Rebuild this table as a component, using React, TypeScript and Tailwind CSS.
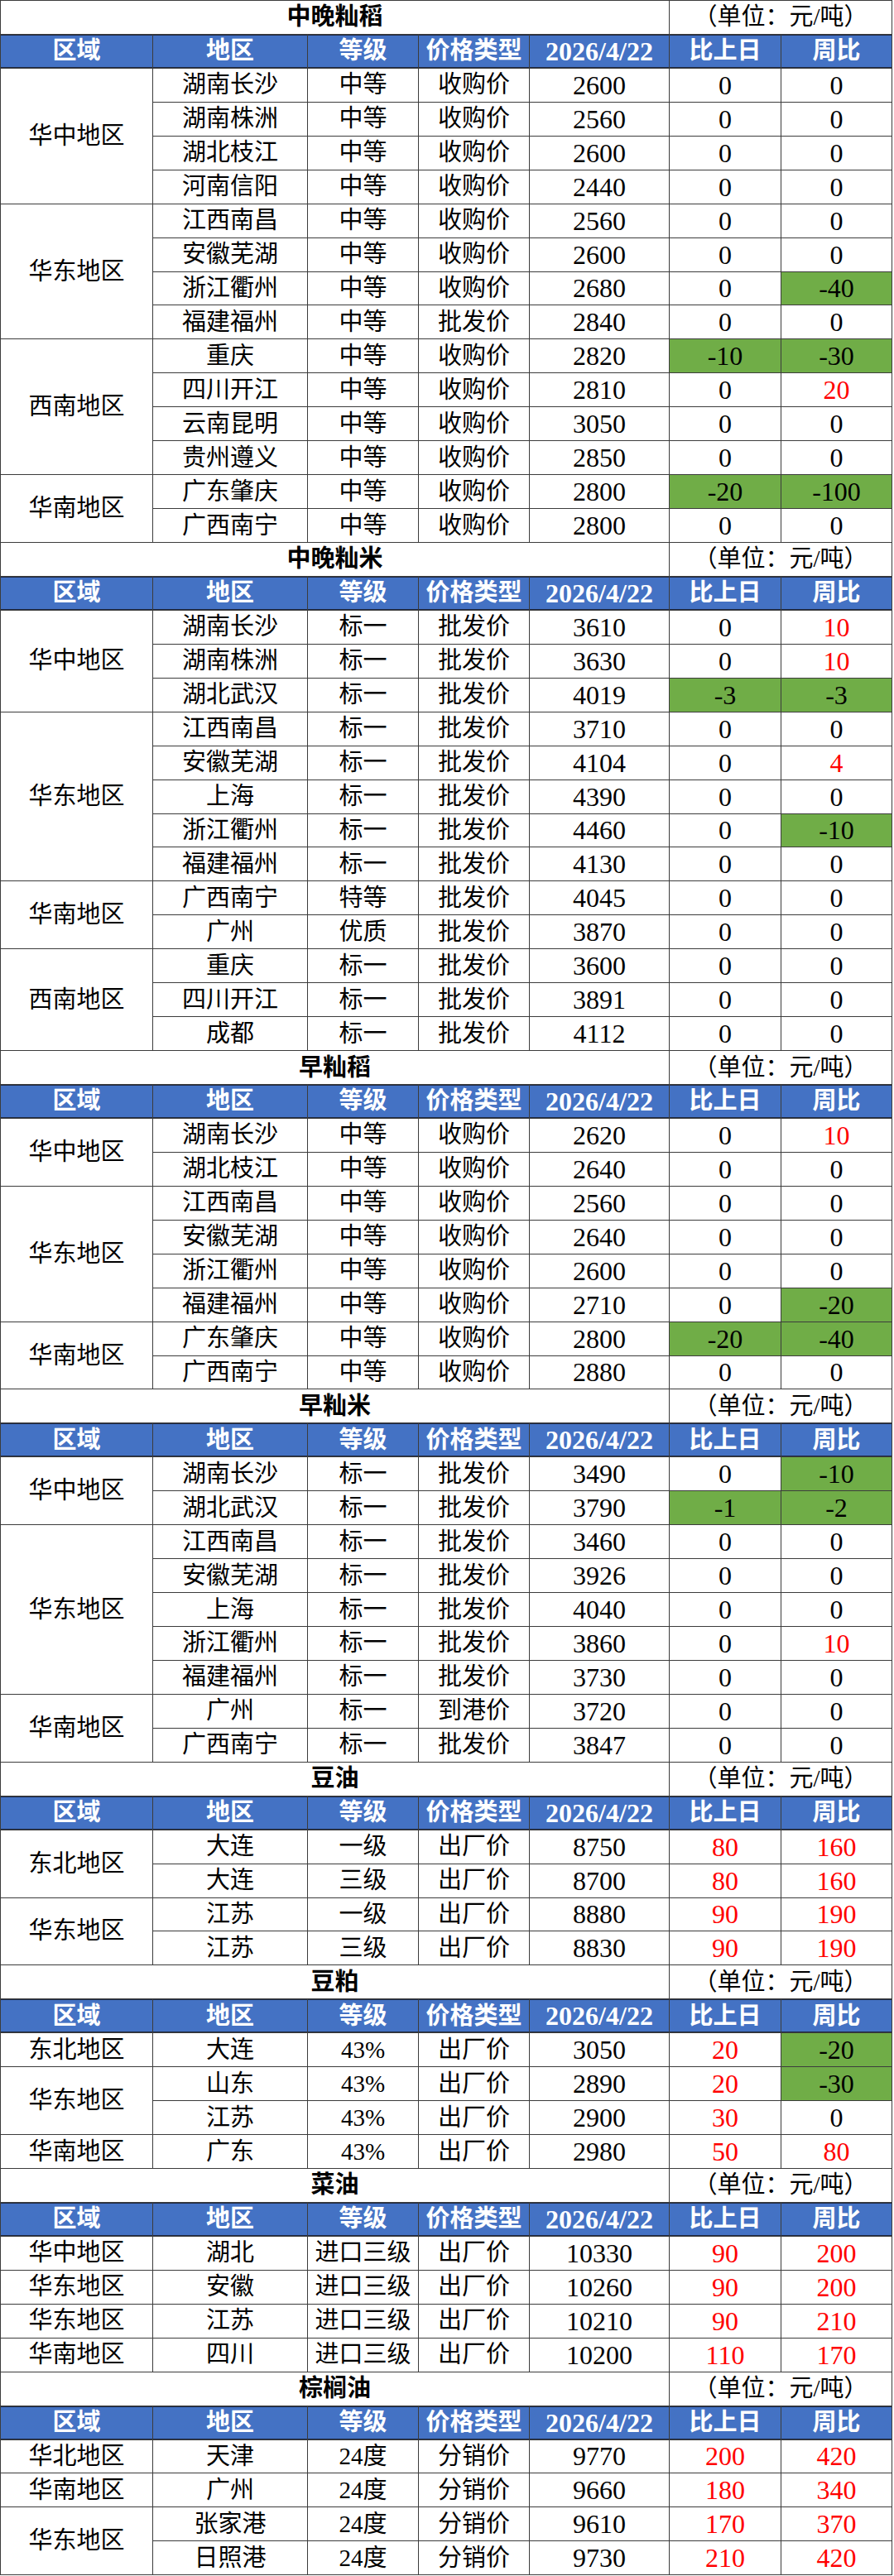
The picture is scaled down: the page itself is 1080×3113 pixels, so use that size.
import React from "react";

type Row = [string, string, string, string, string, string];
type Group = { region: string; rows: Row[] };
type Section = { name: string; groups: Group[] };

const sections: Section[] = [
  {
    name: "中晚籼稻",
    groups: [
      {
        region: "华中地区",
        rows: [
          ["湖南长沙", "中等", "收购价", "2600", "0", "0"],
          ["湖南株洲", "中等", "收购价", "2560", "0", "0"],
          ["湖北枝江", "中等", "收购价", "2600", "0", "0"],
          ["河南信阳", "中等", "收购价", "2440", "0", "0"],
        ],
      },
      {
        region: "华东地区",
        rows: [
          ["江西南昌", "中等", "收购价", "2560", "0", "0"],
          ["安徽芜湖", "中等", "收购价", "2600", "0", "0"],
          ["浙江衢州", "中等", "收购价", "2680", "0", "-40"],
          ["福建福州", "中等", "批发价", "2840", "0", "0"],
        ],
      },
      {
        region: "西南地区",
        rows: [
          ["重庆", "中等", "收购价", "2820", "-10", "-30"],
          ["四川开江", "中等", "收购价", "2810", "0", "20"],
          ["云南昆明", "中等", "收购价", "3050", "0", "0"],
          ["贵州遵义", "中等", "收购价", "2850", "0", "0"],
        ],
      },
      {
        region: "华南地区",
        rows: [
          ["广东肇庆", "中等", "收购价", "2800", "-20", "-100"],
          ["广西南宁", "中等", "收购价", "2800", "0", "0"],
        ],
      },
    ],
  },
  {
    name: "中晚籼米",
    groups: [
      {
        region: "华中地区",
        rows: [
          ["湖南长沙", "标一", "批发价", "3610", "0", "10"],
          ["湖南株洲", "标一", "批发价", "3630", "0", "10"],
          ["湖北武汉", "标一", "批发价", "4019", "-3", "-3"],
        ],
      },
      {
        region: "华东地区",
        rows: [
          ["江西南昌", "标一", "批发价", "3710", "0", "0"],
          ["安徽芜湖", "标一", "批发价", "4104", "0", "4"],
          ["上海", "标一", "批发价", "4390", "0", "0"],
          ["浙江衢州", "标一", "批发价", "4460", "0", "-10"],
          ["福建福州", "标一", "批发价", "4130", "0", "0"],
        ],
      },
      {
        region: "华南地区",
        rows: [
          ["广西南宁", "特等", "批发价", "4045", "0", "0"],
          ["广州", "优质", "批发价", "3870", "0", "0"],
        ],
      },
      {
        region: "西南地区",
        rows: [
          ["重庆", "标一", "批发价", "3600", "0", "0"],
          ["四川开江", "标一", "批发价", "3891", "0", "0"],
          ["成都", "标一", "批发价", "4112", "0", "0"],
        ],
      },
    ],
  },
  {
    name: "早籼稻",
    groups: [
      {
        region: "华中地区",
        rows: [
          ["湖南长沙", "中等", "收购价", "2620", "0", "10"],
          ["湖北枝江", "中等", "收购价", "2640", "0", "0"],
        ],
      },
      {
        region: "华东地区",
        rows: [
          ["江西南昌", "中等", "收购价", "2560", "0", "0"],
          ["安徽芜湖", "中等", "收购价", "2640", "0", "0"],
          ["浙江衢州", "中等", "收购价", "2600", "0", "0"],
          ["福建福州", "中等", "收购价", "2710", "0", "-20"],
        ],
      },
      {
        region: "华南地区",
        rows: [
          ["广东肇庆", "中等", "收购价", "2800", "-20", "-40"],
          ["广西南宁", "中等", "收购价", "2880", "0", "0"],
        ],
      },
    ],
  },
  {
    name: "早籼米",
    groups: [
      {
        region: "华中地区",
        rows: [
          ["湖南长沙", "标一", "批发价", "3490", "0", "-10"],
          ["湖北武汉", "标一", "批发价", "3790", "-1", "-2"],
        ],
      },
      {
        region: "华东地区",
        rows: [
          ["江西南昌", "标一", "批发价", "3460", "0", "0"],
          ["安徽芜湖", "标一", "批发价", "3926", "0", "0"],
          ["上海", "标一", "批发价", "4040", "0", "0"],
          ["浙江衢州", "标一", "批发价", "3860", "0", "10"],
          ["福建福州", "标一", "批发价", "3730", "0", "0"],
        ],
      },
      {
        region: "华南地区",
        rows: [
          ["广州", "标一", "到港价", "3720", "0", "0"],
          ["广西南宁", "标一", "批发价", "3847", "0", "0"],
        ],
      },
    ],
  },
  {
    name: "豆油",
    groups: [
      {
        region: "东北地区",
        rows: [
          ["大连", "一级", "出厂价", "8750", "80", "160"],
          ["大连", "三级", "出厂价", "8700", "80", "160"],
        ],
      },
      {
        region: "华东地区",
        rows: [
          ["江苏", "一级", "出厂价", "8880", "90", "190"],
          ["江苏", "三级", "出厂价", "8830", "90", "190"],
        ],
      },
    ],
  },
  {
    name: "豆粕",
    groups: [
      { region: "东北地区", rows: [["大连", "43%", "出厂价", "3050", "20", "-20"]] },
      {
        region: "华东地区",
        rows: [
          ["山东", "43%", "出厂价", "2890", "20", "-30"],
          ["江苏", "43%", "出厂价", "2900", "30", "0"],
        ],
      },
      { region: "华南地区", rows: [["广东", "43%", "出厂价", "2980", "50", "80"]] },
    ],
  },
  {
    name: "菜油",
    groups: [
      { region: "华中地区", rows: [["湖北", "进口三级", "出厂价", "10330", "90", "200"]] },
      { region: "华东地区", rows: [["安徽", "进口三级", "出厂价", "10260", "90", "200"]] },
      { region: "华东地区", rows: [["江苏", "进口三级", "出厂价", "10210", "90", "210"]] },
      { region: "华南地区", rows: [["四川", "进口三级", "出厂价", "10200", "110", "170"]] },
    ],
  },
  {
    name: "棕榈油",
    groups: [
      { region: "华北地区", rows: [["天津", "24度", "分销价", "9770", "200", "420"]] },
      { region: "华南地区", rows: [["广州", "24度", "分销价", "9660", "180", "340"]] },
      {
        region: "华东地区",
        rows: [
          ["张家港", "24度", "分销价", "9610", "170", "370"],
          ["日照港", "24度", "分销价", "9730", "210", "420"],
        ],
      },
    ],
  },
];

const headers = ["区域", "地区", "等级", "价格类型", "2026/4/22", "比上日", "周比"];

const rowSpan: Record<number, string> = {
  1: "row-span-1",
  2: "row-span-2",
  3: "row-span-3",
  4: "row-span-4",
  5: "row-span-5",
};

const cell = "flex items-center justify-center bg-white text-black";
const num = "text-[32px]";

function Change({ v }: { v: string }) {
  const n = Number(v);
  if (n < 0) return <div className={`${cell} ${num} !bg-[#70ad47]`}>{v}</div>;
  if (n > 0) return <div className={`${cell} ${num} !text-[#ff0000]`}>{v}</div>;
  return <div className={`${cell} ${num}`}>{v}</div>;
}

function SectionRows({ section }: { section: Section }) {
  return (
    <>
      <div className={`${cell} col-span-5 font-bold`}>{section.name}</div>
      <div className={`${cell} col-span-2`}>（单位：元/吨）</div>
      {headers.map((h) => (
        <div
          key={h}
          className={`flex items-center justify-center bg-[#4472c4] text-white font-bold border-y border-[#1f2a44] ${
            h === "2026/4/22" ? "text-[32px]" : ""
          }`}
        >
          {h}
        </div>
      ))}
      {section.groups.map((g, gi) => (
        <React.Fragment key={gi}>
          <div className={`${cell} ${rowSpan[g.rows.length]}`}>{g.region}</div>
          {g.rows.map((r, ri) => (
            <React.Fragment key={ri}>
              <div className={`${cell} col-start-2`}>{r[0]}</div>
              <div className={cell}>{r[1]}</div>
              <div className={cell}>{r[2]}</div>
              <div className={`${cell} ${num}`}>{r[3]}</div>
              <Change v={r[4]} />
              <Change v={r[5]} />
            </React.Fragment>
          ))}
        </React.Fragment>
      ))}
    </>
  );
}

export default function App() {
  return (
    <div className="w-[1080px] bg-white">
      <div
        className="grid w-[1078px] grid-cols-[183px_186px_133px_133px_168px_134px_133px] auto-rows-[39.95px] gap-px bg-[#3c3c3c] p-px text-[29px] leading-none"
        style={{ fontFamily: '"Liberation Serif", "Noto Sans CJK SC", serif' }}
      >
        {sections.map((s) => (
          <SectionRows key={s.name} section={s} />
        ))}
      </div>
    </div>
  );
}
